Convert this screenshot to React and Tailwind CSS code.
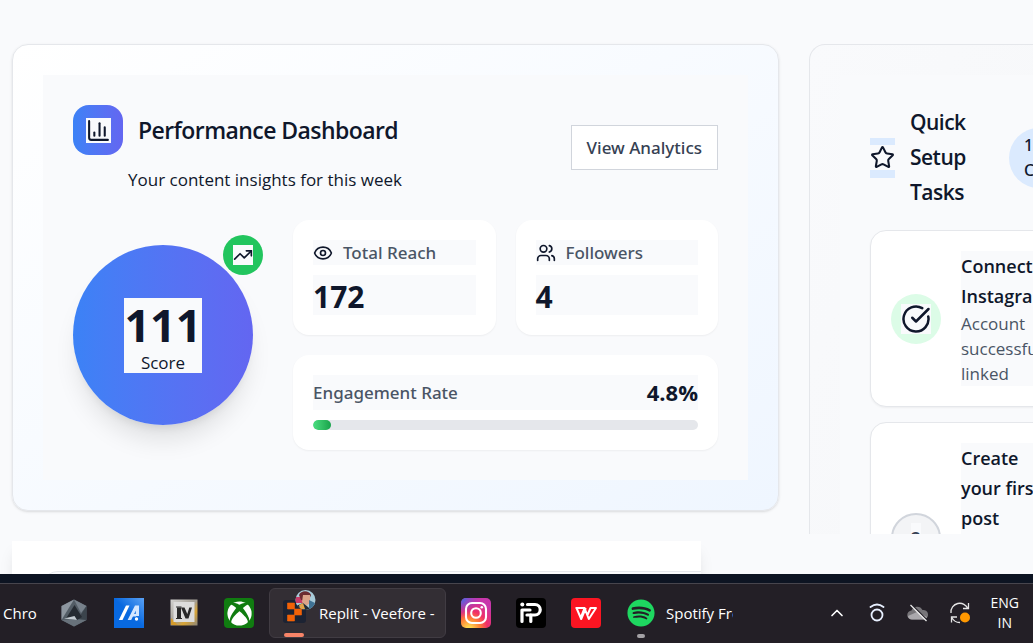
import { ChartColumn, ChevronUp, CircleCheckBig, Eye, Star, TrendingUp, Users } from "lucide-react";
import { FaSpotify, FaXbox } from "react-icons/fa";

function StatCard({ icon: Icon, label, value }) {
  return (
    <div className="rounded-2xl bg-white p-5 shadow-xs">
      <div className="flex h-[25px] items-center gap-2.5 bg-[#f9fafc]">
        <Icon size={20} />
        <h3 className="font-['Noto_Sans',sans-serif] text-[17px] leading-[25px] font-medium text-gray-600">{label}</h3>
      </div>
      <p className="mt-2.5 h-10 bg-[#f9fafc] text-[30px] leading-[43px] font-bold">{value}</p>
    </div>
  );
}

function PerformanceCard() {
  return (
    <section className="rounded-2xl border border-gray-200 bg-linear-to-br from-white to-[#eff6ff] p-[30px] shadow-sm">
      <div className="bg-[#f9fafc] p-[30px]">
        <header className="flex items-center justify-between">
          <div>
            <div className="flex h-[50px] items-center gap-[15px]">
              <span className="flex size-[50px] items-center justify-center rounded-2xl bg-linear-to-r from-[#3b82f6] to-[#6366f1]">
                <ChartColumn size={25} className="bg-[#f9fafc]" />
              </span>
              <h2 className="text-[23px] leading-[54px] font-semibold tracking-tight">Performance Dashboard</h2>
            </div>
            <p className="mt-3 -mb-0.5 pl-[55px] text-[17px] leading-[25px]">Your content insights for this week</p>
          </div>
          <button type="button" className="h-[45px] border border-gray-300 bg-white px-[15px] font-['Noto_Sans',sans-serif] text-[17px] font-medium whitespace-nowrap text-gray-700">
            View Analytics
          </button>
        </header>

        <div className="mt-[30px] flex items-center gap-10">
          <div className="relative flex size-[180px] shrink-0 items-center justify-center rounded-full bg-linear-to-r from-[#3b82f6] to-[#6366f1] shadow-xl">
            <div className="bg-[#f9fafc] text-center">
              <p className="text-[45px] leading-[54px] font-bold">111</p>
              <p className="text-[17px] leading-[21px]">Score</p>
            </div>
            <span className="absolute -top-2.5 -right-2.5 flex size-10 items-center justify-center rounded-full bg-[#22c55e]">
              <TrendingUp size={20} className="bg-[#f9fafc]" />
            </span>
          </div>

          <div className="grid flex-1 grid-cols-2 gap-5">
            <StatCard icon={Eye} label="Total Reach" value="172" />
            <StatCard icon={Users} label="Followers" value="4" />
            <div className="col-span-2 rounded-2xl bg-white p-5 shadow-xs">
              <div className="flex h-[35px] items-center justify-between bg-[#f9fafc]">
                <h3 className="font-['Noto_Sans',sans-serif] text-[17px] font-medium text-gray-600">Engagement Rate</h3>
                <span className="text-[22px] font-bold">4.8%</span>
              </div>
              <div className="mt-2.5 h-2.5 overflow-hidden rounded-full bg-gray-200">
                <div className="h-full w-[18px] rounded-full bg-linear-to-r from-[#4ade80] to-[#16a34a]" />
              </div>
            </div>
          </div>
        </div>
      </div>
    </section>
  );
}

function Task({ marker, title, note }) {
  return (
    <li className="flex items-center gap-5 rounded-2xl border border-gray-200 bg-white p-5 shadow-xs">
      {marker}
      <div className="w-[110px] shrink-0 bg-[#f9fafc]">
        <h3 className="text-[18px] leading-[30px] font-semibold">{title}</h3>
        <p className="text-[17px] leading-[25px] text-gray-600">{note}</p>
      </div>
    </li>
  );
}

function SetupPanel() {
  return (
    <section className="max-h-[490px] w-56 shrink-0 overflow-hidden rounded-tl-2xl border-t border-l border-gray-200 bg-linear-to-br from-[#f9fafc] to-[#f6f7f9] pt-[30px] pl-[30px]">
      <div className="w-[308px] bg-[#f9fafc] p-[30px]">
        <header className="flex items-center">
          <span className="bg-[#dbeafe] pt-[7px] pb-2">
            <Star size={25} className="bg-[#f9fafc]" />
          </span>
          <h2 className="ml-[15px] w-[99px] shrink-0 text-[21px] leading-[35px] font-semibold tracking-tight">
            Quick<br />Setup<br />Tasks
          </h2>
          <span className="shrink-0 rounded-full bg-[#dbeafe] px-[15px] py-[5px] font-['Noto_Sans',sans-serif] text-[16px] leading-[25px] font-medium">
            1/3<br />Complete
          </span>
        </header>
        <ul className="mt-5 flex flex-col gap-[15px]">
          <Task
            title={<>Connect<br />Instagram</>}
            note={<>Account<br />successfully<br />linked</>}
            marker={
              <span className="flex size-[50px] shrink-0 items-center justify-center rounded-full bg-[#dcfce7]">
                <CircleCheckBig size={30} className="bg-[#f9fafc]" />
              </span>
            }
          />
          <Task
            title={<>Create<br />your first<br />post</>}
            note={<>Share<br />your<br />first<br />content</>}
            marker={
              <span className="flex size-[50px] shrink-0 items-center justify-center rounded-full border-2 border-gray-300 bg-gray-100">
                <span className="bg-[#f9fafc] text-[18px] leading-[30px] font-semibold text-gray-700">2</span>
              </span>
            }
          />
        </ul>
      </div>
    </section>
  );
}

function HexagonLogo() {
  return (
    <svg viewBox="0 0 30 30" className="size-[30px]" aria-hidden="true">
      <path d="M15 1.500 27.500 8v14L15 28.500 2.500 22V8z" fill="#535d66" />
      <path d="M15 1.500 27.500 8 22 15z" fill="#77818b" />
      <path d="M15 1.500 2.500 8v14z" fill="#8d969f" />
      <path d="M2.500 22 15 28.500 27.500 22 17 21z" fill="#68727b" />
      <path d="M27.500 8v14L19 21z" fill="#3b444c" />
      <path d="M15.500 7 7 20.500 18 22l5-3z" fill="#252b32" />
      <path d="M5 20.500 15.500 18 18 22z" fill="#c3cbd1" />
    </svg>
  );
}

function SlashALogo() {
  return (
    <svg viewBox="0 0 30 30" className="size-[30px]" aria-hidden="true">
      <defs>
        <linearGradient id="slash-a" x1="0" y1="1" x2="1" y2="0">
          <stop offset="0.5" stopColor="#0869e0" />
          <stop offset="1" stopColor="#5ba2f5" />
        </linearGradient>
      </defs>
      <path d="M0 0h30v30H0z" fill="url(#slash-a)" />
      <path d="M12 7.500h3.500L8.500 22H4.800z" fill="#fff" />
      <path d="M21 7.500h4V18h-3.200v-5.500L17.200 22h-3.600z" fill="#d5e7ff" />
      <path d="M18 16h5l-1 2.500h-5z" fill="#d5e7ff" />
      <circle cx="22.500" cy="21" r="1.700" fill="#fff" />
    </svg>
  );
}

function PlateLogo() {
  return (
    <svg viewBox="0 0 30 30" className="size-[30px]" aria-hidden="true">
      <defs>
        <linearGradient id="plate" x1="0" y1="0" x2="1" y2="1">
          <stop offset="0" stopColor="#d4d4d2" />
          <stop offset="0.5" stopColor="#a29d93" />
          <stop offset="0.7" stopColor="#d9a536" />
          <stop offset="1" stopColor="#8b867c" />
        </linearGradient>
      </defs>
      <path d="M1.500 1.500h27v26h-27z" fill="url(#plate)" />
      <path d="M2 20v7h7z" fill="#d59b2c" />
      <path d="M4.500 4h21v20h-21z" fill="#dddddc" />
      <path d="M8 9.500h4v11H8z" fill="#292929" />
      <path d="M12 9.500h3.500l2.800 6.500 2-6.500H23l-3.500 11h-3z" fill="#292929" />
      <path d="M7 9h5.500M7 20.500h6" stroke="#292929" strokeWidth="1.200" />
    </svg>
  );
}

function ReplitLogo() {
  return (
    <svg viewBox="0 0 34 36" className="h-9 w-[34px]" aria-hidden="true">
      <rect x="1" y="11" width="23" height="23" rx="3" fill="#1c2333" />
      <path d="M5.500 14h7v6h-7zM12.500 20h7v6h-7zM5.500 26h7v6h-7z" fill="#f26207" stroke="#f26207" strokeWidth="0.6" strokeLinejoin="round" />
      <clipPath id="avatar"><circle cx="23.500" cy="11" r="10" /></clipPath>
      <g clipPath="url(#avatar)">
        <path d="M13 1h21v21H13z" fill="#a9cbd9" />
        <path d="M13 8h10v6H13z" fill="#c83b67" />
        <path d="M17 6c2-5 10-5 12 0l-2 5h-8z" fill="#6b2c31" />
        <path d="M21 6h7v8l-4 3-4-4z" fill="#dba48a" />
        <path d="M14 22v-5l7-3 5 4 4 4z" fill="#232b35" />
        <path d="m27 11 6 3v8h-6z" fill="#3f7294" />
        <path d="m17 16 4-2 2 6h-5z" fill="#e1a34a" />
      </g>
    </svg>
  );
}

function InstagramLogo() {
  return (
    <svg viewBox="0 0 30 30" className="size-[30px]" aria-hidden="true">
      <defs>
        <radialGradient id="insta-warm" cx="0.27" cy="1.05" r="1">
          <stop offset="0.08" stopColor="#ffda4f" />
          <stop offset="0.38" stopColor="#ff7e36" />
          <stop offset="0.62" stopColor="#f02e68" />
          <stop offset="1" stopColor="#c837ab" />
        </radialGradient>
        <radialGradient id="insta-cool" cx="0" cy="0" r="0.65">
          <stop offset="0" stopColor="#3771e8" />
          <stop offset="1" stopColor="#a735c8" stopOpacity="0" />
        </radialGradient>
      </defs>
      <rect width="30" height="30" rx="5" fill="url(#insta-warm)" />
      <rect width="30" height="30" rx="5" fill="url(#insta-cool)" />
      <g fill="none" stroke="#fff" strokeWidth="2.100">
        <rect x="5" y="5" width="20" height="20" rx="6" />
        <circle cx="15" cy="15" r="4.800" />
      </g>
      <circle cx="20.800" cy="9.200" r="1.300" fill="#fff" />
    </svg>
  );
}

function PLogo() {
  return (
    <svg viewBox="0 0 30 30" className="size-[30px]" aria-hidden="true">
      <rect width="30" height="30" rx="4" fill="#000" />
      <g fill="none" stroke="#fff" strokeWidth="3.200" strokeLinecap="round" strokeLinejoin="round">
        <path d="M11.500 6.500H19a5.200 5.200 0 0 1 0 10.500h-8" />
        <path d="M6 23.500V12h8M14.800 17v6.500" />
      </g>
      <circle cx="6.300" cy="6.500" r="2" fill="#fff" />
    </svg>
  );
}

function WLogo() {
  return (
    <svg viewBox="0 0 30 30" className="size-[30px]" aria-hidden="true">
      <rect width="30" height="30" rx="4" fill="#fb1522" />
      <path d="M4.500 10h9l-3.500 9M5.500 10l4.700 11 4.600-11M13.500 10l4.300 11L25 10h-5.500l-2.800 6.500" fill="none" stroke="#fff" strokeWidth="2" strokeLinejoin="round" />
    </svg>
  );
}

function RingIcon() {
  return (
    <svg viewBox="0 0 20 20" className="size-5" fill="none" stroke="#e8f0ff" strokeWidth="1.800" strokeLinecap="round" aria-hidden="true">
      <circle cx="10" cy="12" r="5.500" />
      <path d="M3.500 4Q10-1 16.500 4" />
    </svg>
  );
}

function CloudOffIcon() {
  return (
    <svg viewBox="0 0 22 20" className="h-5 w-[22px]" aria-hidden="true">
      <path d="M5 16.500a4.500 4.500 0 0 1-.5-9 6 6 0 0 1 11-.5 4.800 4.800 0 0 1 1.500 9.500z" fill="#777579" />
      <path d="M5 16.500c-3 0-4-2-4-3.500l9-4 10 5c-1 2-2 2.500-4 2.500z" fill="#aaa8ac" />
      <path d="m4.500 1.500 16 16" stroke="#221f26" strokeWidth="1.500" />
      <path d="m3.500 2 16 16" stroke="#eee" strokeWidth="1.300" />
    </svg>
  );
}

function SyncIcon() {
  return (
    <svg viewBox="0 0 22 22" className="size-[22px]" fill="none" stroke="#e5e5e5" strokeWidth="1.300" aria-hidden="true">
      <path d="M2 11a8.800 8.800 0 0 1 17-4M19.500 1v5.500H14M8 15H2.500v5.500M3 16a9 9 0 0 0 8 4.500" />
      <circle cx="16" cy="15.500" r="5" fill="#ff9800" stroke="none" />
    </svg>
  );
}

function Taskbar() {
  return (
    <footer className="shrink-0 border-t-[9px] border-[#0d1422] bg-[#231f26] text-[15px] text-white">
      <div className="flex h-[60px] items-center justify-between overflow-hidden border-t border-[#47454d] pr-3.5 pb-px">
        <div className="flex items-center gap-[25px]">
          <span className="-mr-px w-[35px] pl-[3px]">Chro</span>
          <HexagonLogo />
          <SlashALogo />
          <PlateLogo />
          <span className="flex size-[30px] items-center justify-center rounded-sm bg-[#107c10]">
            <FaXbox size={25} />
          </span>
          <button type="button" className="relative -mx-2.5 flex h-[50px] w-[177px] items-center gap-[3px] rounded-md border border-[#413c43] bg-[#332e34] pl-3 text-left whitespace-nowrap">
            <span className="-mt-3">
              <ReplitLogo />
            </span>
            <span>Replit - Veefore -</span>
            <span className="absolute bottom-0 left-3.5 h-1 w-5 rounded-full bg-[#f88468]" />
          </button>
          <InstagramLogo />
          <PLogo />
          <WLogo />
          <div className="relative flex h-[50px] items-center gap-2.5">
            <span className="flex w-[30px] justify-center">
              <FaSpotify size={28} color="#1ed760" />
            </span>
            <span className="w-[67px] overflow-hidden whitespace-nowrap">Spotify Free</span>
            <span className="absolute bottom-0 left-[11px] h-1 w-2 rounded-full bg-[#a3a1a5]" />
          </div>
        </div>
        <div className="flex items-center gap-5">
          <ChevronUp size={20} />
          <RingIcon />
          <CloudOffIcon />
          <SyncIcon />
          <p className="text-center text-[14px] leading-5">
            ENG<br />IN
          </p>
        </div>
      </div>
    </footer>
  );
}

export default function App() {
  return (
    <div className="flex h-screen flex-col overflow-hidden bg-[#f9fafc] font-['Segoe_UI','Open_Sans',sans-serif] text-slate-900">
      <main className="flex min-h-0 flex-1 items-start gap-[30px] overflow-hidden pt-11 pl-3">
        <div className="min-w-0 flex-1">
          <PerformanceCard />
          <section className="mt-[30px] mr-[78px] bg-white pt-[30px] pl-[30px] shadow-lg">
            <div className="h-20 rounded-tl-2xl border-t border-gray-200 bg-[#f9fafc]" />
          </section>
        </div>
        <SetupPanel />
      </main>
      <Taskbar />
    </div>
  );
}
